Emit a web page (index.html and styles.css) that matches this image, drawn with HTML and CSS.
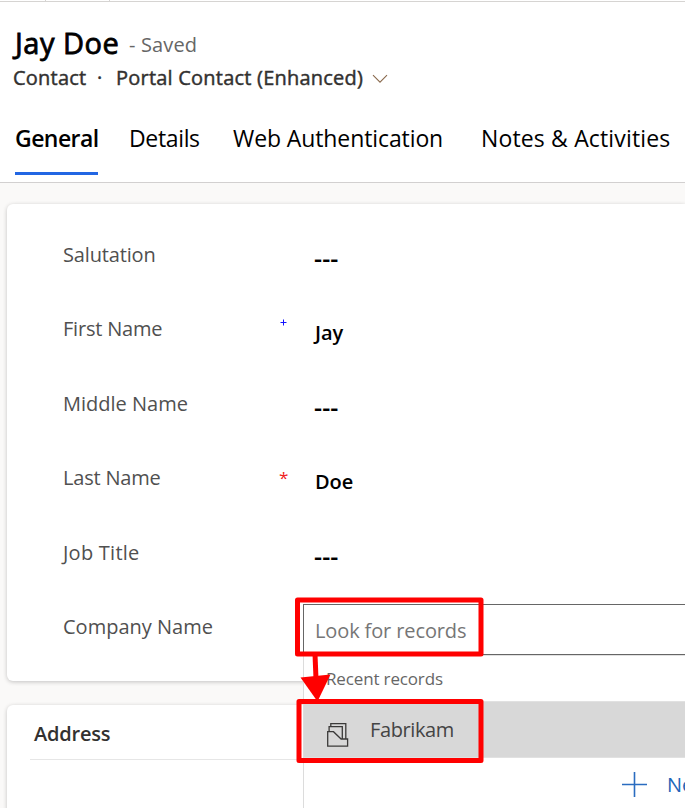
FILE: index.html
```html
<!DOCTYPE html>
<html lang="en">
<head>
<meta charset="utf-8">
<title>Contact: Jay Doe</title>
<link rel="stylesheet" href="styles.css">
</head>
<body>
<div class="commandbar"><span></span><span></span><span></span></div>
<header class="header">
  <div class="title-row"><h1 class="name">Jay Doe</h1><span class="saved">- Saved</span></div>
  <div class="meta-row"><span class="entity">Contact</span><span class="dot">·</span><span class="form-name">Portal Contact (Enhanced)</span>
    <svg class="chevron" width="16" height="10" viewBox="0 0 16 10"><path d="M1 1.2 8 8.2 15 1.2" fill="none" stroke="#8a6a4e" stroke-width="1.1"/></svg>
  </div>
  <nav class="tabs">
    <a class="tab active">General</a><a class="tab details">Details</a><a class="tab webauth">Web Authentication</a><a class="tab notes">Notes &amp; Activities</a>
  </nav>
</header>
<main class="content">
  <section class="card fields">
    <div class="row"><span class="label salutation">Salutation</span><span class="mark"></span><span class="value empty">---</span></div>
    <div class="row"><span class="label first">First Name</span><span class="mark"><svg width="7" height="7" viewBox="0 0 7 7"><path d="M0.5 3.5h6M3.5 0.5v6" stroke="#1414ff" stroke-width="1"/></svg></span><span class="value">Jay</span></div>
    <div class="row"><span class="label">Middle Name</span><span class="mark"></span><span class="value empty">---</span></div>
    <div class="row"><span class="label last">Last Name</span><span class="mark required">*</span><span class="value">Doe</span></div>
    <div class="row"><span class="label job">Job Title</span><span class="mark"></span><span class="value empty">---</span></div>
    <div class="row"><span class="label">Company Name</span></div>
  </section>
  <section class="card address"><h2>Address</h2></section>
</main>
<div class="lookup">
  <div class="search"><span>Look for records</span></div>
  <div class="results">
    <div class="recent"><span>Recent records</span></div>
    <div class="option">
      <svg class="folder" width="22" height="24" viewBox="0 0 22 24"><g fill="none" stroke="#3b3a39" stroke-width="1.3"><path d="M3.8 3.5V.7h15v15.2M2.1 8V3.7h13.2v11.6M.7 8.7h5.8l7.6 7.3h6.5v7.1H.7z"/></g></svg>
      <span>Fabrikam</span>
    </div>
    <div class="create"><svg width="25" height="25" viewBox="0 0 25 25"><path d="M0 12.5h25M12.5 0v25" stroke="#2a6cc0" stroke-width="1.6"/></svg><span>New</span></div>
  </div>
</div>
<svg class="annotations" width="685" height="808" viewBox="0 0 685 808">
  <g fill="none" stroke="#f00" stroke-width="5" stroke-linejoin="round"><rect x="297.5" y="600" width="183.5" height="54"/><rect x="299" y="701.5" width="182" height="59"/><path d="M315 654l1 25"/></g>
  <path d="M300.5 677.5 330.5 674.5 317.5 701.5z" fill="#f00"/>
</svg>
</body>
</html>
```
FILE: styles.css
```css
* { box-sizing: border-box; }
html, body { margin: 0; width: 685px; height: 808px; overflow: hidden; }
body { position: relative; background: #faf9f8; font-family: "Open Sans", sans-serif; color: #000; }
span, a, h1, h2 { white-space: nowrap; }
.commandbar { height: 2px; background: #fff; border-bottom: 1px solid #d6d4d2; display: flex; }
.commandbar span { height: 1px; width: 46px; border-right: 1px solid #d6d4d2; }
.commandbar span + span { width: 64px; }
.commandbar span:last-child { border: 0; }
.header { height: 181px; background: #fff; border-bottom: 1px solid #d2d0d0; padding: 20px 0 0 13px; }
.title-row { display: flex; height: 40px; line-height: 40px; }
.name { margin: 0; padding-left: 2px; width: 116px; font-size: 29px; font-weight: 400; line-height: 42px; letter-spacing: .5px; -webkit-text-stroke: .8px #000; }
.saved { font-size: 20px; line-height: 45px; color: #666; letter-spacing: .15px; }
.meta-row { display: flex; align-items: center; height: 30px; color: #323130; font-size: 20px; -webkit-text-stroke: .45px #323130; letter-spacing: .22px; }
.entity { width: 84px; }
.dot { width: 19px; }
.form-name { width: 256px; }
.chevron { margin-top: 3px; -webkit-text-stroke: 0; }
.tabs { display: flex; height: 83px; padding: 27px 0 0 2px; font-size: 23px; line-height: 38px; }
.tab { height: 56px; }
.active { width: 83px; font-weight: 600; letter-spacing: -.55px; border-bottom: 3px solid #2266e3; margin-right: 31px; }
.details { width: 104px; letter-spacing: -.35px; }
.webauth { width: 248px; letter-spacing: -.1px; }
.notes { letter-spacing: .15px; }
.content { padding: 21px 0 0 7px; }
.card { background: #fff; border-radius: 6px 0 0 6px; box-shadow: 0 1px 4px rgba(0,0,0,.22); }
.fields { height: 477px; padding: 14px 0 0 56px; }
.row { display: flex; align-items: flex-start; height: 74.4px; line-height: 74.4px; }
.label { width: 217px; font-size: 20px; color: #505050; }
.salutation { letter-spacing: -.15px; }
.first, .last { letter-spacing: -.2px; }
.job { letter-spacing: .25px; }
.mark { width: 35px; color: #f02020; font-size: 17px; }
.required { margin-left: -1px; width: 36px; }
.mark svg { display: block; margin-top: 27px; }
.value { font-size: 20px; font-weight: 600; padding-top: 4px; letter-spacing: -.1px; }
.empty { font-size: 25px; letter-spacing: .1px; padding-top: 3px; margin-left: -1px; }
.address { height: 140px; margin-top: 24px; padding-left: 23px; }
.address h2 { margin: 0; height: 55px; border-bottom: 1px solid #e6e6e6; padding-left: 4px; color: #323130; font-size: 20px; line-height: 57px; font-weight: 600; letter-spacing: -.2px; }
.lookup { position: absolute; left: 303px; top: 604px; width: 382px; height: 204px; background: #fff; overflow: hidden; }
.search { height: 51px; border: 1px solid #666; border-right: 0; padding-left: 11px; line-height: 51px; font-size: 20px; letter-spacing: -.12px; color: #767676; }
.results { height: 153px; border-left: 1px solid #dcdcdc; }
.recent { height: 46px; border-top: 1px solid #e1e1e1; padding-left: 22px; line-height: 46px; font-size: 17px; letter-spacing: -.15px; color: #666; }
.option { height: 57px; border-top: 1px solid #e1e1e1; border-bottom: 1px solid #e1e1e1; background: #d8d8d8; display: flex; align-items: center; color: #444; font-size: 20px; letter-spacing: -.4px; }
.folder { margin: 10px 21px 0 23px; flex: none; }
.create { display: flex; align-items: center; height: 50px; padding: 2px 0 0 318px; gap: 20px; color: #2266b8; font-size: 20px; }
.create svg { flex: none; }
.annotations { position: absolute; left: 0; top: 0; }
```
